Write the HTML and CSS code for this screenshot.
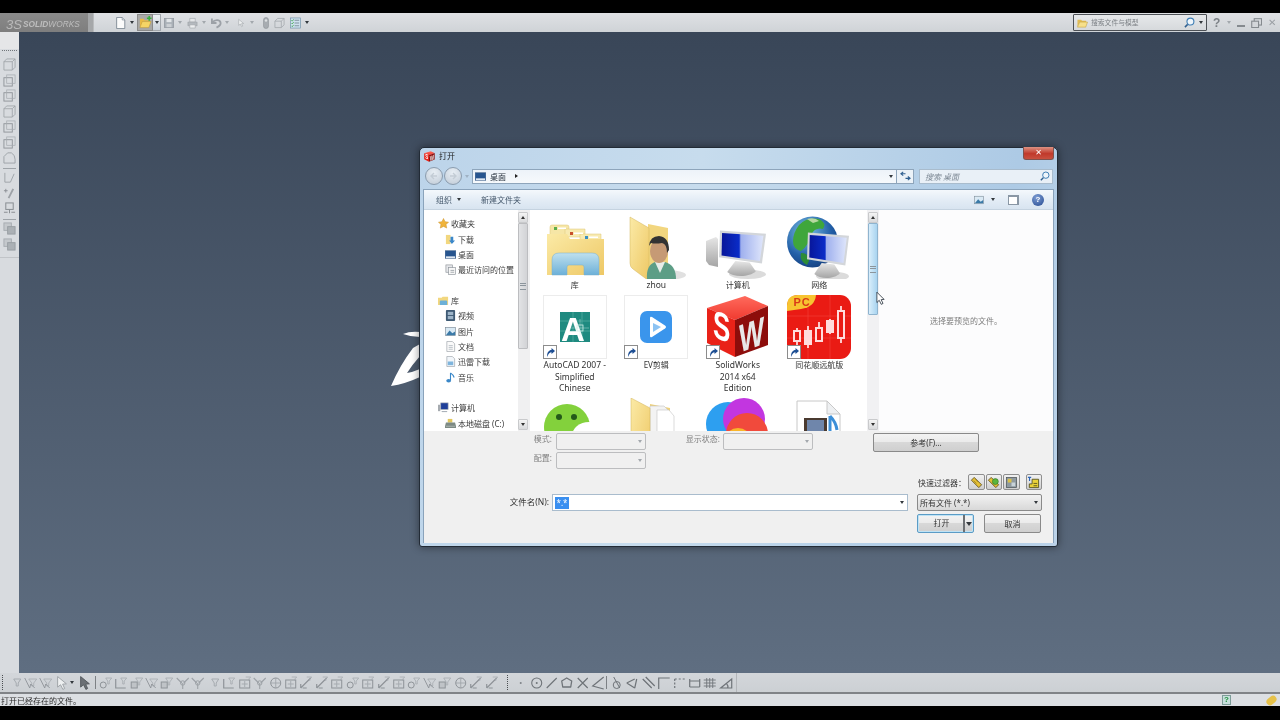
FILE: index.html
```html
<!DOCTYPE html>
<html lang="zh-CN">
<head>
<meta charset="utf-8">
<title>SolidWorks - 打开</title>
<link rel="stylesheet" href="styles.css">
</head>
<body>
<svg class="defs" xmlns="http://www.w3.org/2000/svg">
  <defs>
    <linearGradient id="gFolder" x1="0" y1="0" x2="1" y2="1"><stop offset="0" stop-color="#fbeaa6"/><stop offset="1" stop-color="#eec865"/></linearGradient>
    <linearGradient id="gBlue" x1="0" y1="0" x2="0" y2="1"><stop offset="0" stop-color="#bfe0ee"/><stop offset="1" stop-color="#6cb0d8"/></linearGradient>
    <linearGradient id="gScreen" x1="0" y1="0" x2="1" y2="0"><stop offset="0" stop-color="#08169a"/><stop offset=".42" stop-color="#0a2cc8"/><stop offset=".46" stop-color="#9fb0ee"/><stop offset="1" stop-color="#dfe6fb"/></linearGradient>
    <linearGradient id="gGray" x1="0" y1="0" x2="0" y2="1"><stop offset="0" stop-color="#e6e6e6"/><stop offset="1" stop-color="#a5a5a5"/></linearGradient>
    <radialGradient id="gGlobe" cx=".38" cy=".3" r=".8"><stop offset="0" stop-color="#7fc4e8"/><stop offset=".6" stop-color="#2360a8"/><stop offset="1" stop-color="#123a78"/></radialGradient>
    <linearGradient id="gRedTop" x1="0" y1="0" x2="0" y2="1"><stop offset="0" stop-color="#ff6a5c"/><stop offset="1" stop-color="#f03a30"/></linearGradient>
  </defs>

  <symbol id="shortcut" viewBox="0 0 14 14"><rect x=".5" y=".5" width="13" height="13" fill="#fff" stroke="#8c8c8c"/><path d="M4 12 C4 7 6 5 8.500 5 L8.500 3 L12 6 L8.500 9 L8.500 7.200 C7 7.200 5.500 8.500 4 12Z" fill="#1e4f94"/></symbol>

  <symbol id="monitor" viewBox="0 0 46 64" preserveAspectRatio="none">
    <ellipse cx="28" cy="58" rx="18" ry="6" fill="#000" opacity=".14"/>
    <path d="M16 41 L30 43 L36 54 C30 62 14 62 8 55Z" fill="url(#gGray)"/>
    <path d="M1 2 L46 6 L42 44 L0 36Z" fill="#d3d6da"/>
    <path d="M3 5 L43.500 8.500 L40 41 L2.500 34Z" fill="url(#gScreen)"/>
  </symbol>

  <symbol id="ico-lib" viewBox="0 0 64 64">
    <path d="M7 12 Q7 10 9 10 L24 10 Q26 10 26 12 L26 20 L7 20Z" fill="#f6e6a6" stroke="#dcc477" stroke-width=".5"/>
    <path d="M22 14 L42 14 L42 22 L22 22Z" fill="#f8eab0" stroke="#dcc477" stroke-width=".5"/>
    <path d="M37 19 L58 19 L58 26 L37 26Z" fill="#f8eab0" stroke="#dcc477" stroke-width=".5"/>
    <rect x="11" y="12" width="3" height="3" fill="#5cad4a"/><rect x="15" y="12.500" width="8" height="1.500" fill="#fff"/>
    <rect x="27" y="17" width="3" height="3" fill="#c8502c"/><rect x="31" y="17.500" width="9" height="1.500" fill="#fff"/>
    <rect x="42" y="21" width="3" height="3" fill="#3b8fc0"/><rect x="46" y="21.500" width="9" height="1.500" fill="#fff"/>
    <path d="M4 19 L24 19 L27 24 L61 24 L61 60 L4 60Z" fill="url(#gFolder)"/>
    <path d="M9 60 L9 45 Q9 38 16 38 L49 38 Q56 38 56 45 L56 60 L41 60 L41 52 Q41 50 39 50 L26 50 Q24 50 24 52 L24 60Z" fill="url(#gBlue)" stroke="#79aecb" stroke-width=".5"/>
  </symbol>

  <symbol id="ico-user" viewBox="0 0 64 64">
    <ellipse cx="42" cy="60" rx="20" ry="5" fill="#000" opacity=".12"/>
    <path d="M24 9 L44 13 L44 58 L24 60Z" fill="#f2d67f"/>
    <path d="M6 2 L25 13 L25 66 L9 54 Q6 52 6 48Z" fill="url(#gFolder)" stroke="#d2b55f" stroke-width=".5"/>
    <path d="M23 64 Q22 50 31 47 L41 47 Q52 50 52 64Z" fill="#5d9e86"/>
    <path d="M31 47 L36 58 L41 47Z" fill="#e7ece7"/>
    <ellipse cx="35" cy="36" rx="9" ry="12" fill="#c69a75"/>
    <path d="M25 31 Q26 21 35 21 Q45 22 45 35 L43 38 Q43 29 38 28 Q31 29 27 28Z" fill="#333"/>
  </symbol>

  <symbol id="ico-pc" viewBox="0 0 64 64">
    <path d="M0 26 L10 22 L12 24 L12 52 L3 50 L0 46Z" fill="url(#gGray)"/>
    <use href="#monitor" x="13" y="14" width="47" height="50"/>
  </symbol>

  <symbol id="ico-net" viewBox="0 0 64 64">
    <circle cx="25.500" cy="27" r="25.500" fill="url(#gGlobe)"/>
    <path d="M12 10 Q20 2 32 4 Q40 8 36 14 Q28 12 24 20 Q22 30 14 36 Q6 34 6 26 Q6 18 12 10Z" fill="#3fa63b"/>
    <path d="M14 38 Q22 38 22 46 L20 50 Q12 46 14 38Z" fill="#2d8c36"/>
    <path d="M20 4 Q28 2 32 6 L26 8Z" fill="#b8d8a0"/>
    <use href="#monitor" x="20" y="16" width="42" height="50"/>
  </symbol>

  <symbol id="ico-acad" viewBox="0 0 64 64">
    <rect x="17" y="17" width="30" height="30" fill="#1f8a80"/>
    <path d="M30 17 V47 M39 17 V47 M17 26 H47 M17 36 H47" stroke="#58b0a5" stroke-width=".7"/>
  </symbol>
  <symbol id="ico-acad2" viewBox="0 0 64 64">
    <rect x="34" y="30" width="6" height="6" fill="none" stroke="#cfeee8" stroke-width=".8"/>
    <path d="M37 24 V42 M28 33 H46" stroke="#cfeee8" stroke-width=".4"/>
  </symbol>

  <symbol id="ico-ev" viewBox="0 0 64 64">
    <rect x="16" y="16" width="32" height="32" rx="7" fill="#3a95ec"/>
    <path d="M26 23 Q26 21 28 22 L41 30.500 Q43 32 41 33.500 L28 42 Q26 43 26 41Z" fill="#fff"/>
    <path d="M29 28 L37 32 L29 37Z" fill="#8cc3f3"/>
  </symbol>

  <symbol id="ico-sw" viewBox="0 0 64 64">
    <path d="M1 13 L39 1 L62 11 L29 25Z" fill="url(#gRedTop)"/>
    <path d="M1 13 L29 25 L29 62 L1 48Z" fill="#e92218"/>
    <path d="M29 25 L62 11 L62 50 L29 62Z" fill="#8d0d0b"/>
  </symbol>

  <symbol id="ico-ths" viewBox="0 0 64 64">
    <rect x="0" y="0" width="64" height="64" rx="11" fill="#ea1b14"/>
    <path d="M21 0 V64 M43 0 V64 M0 21 H64 M0 43 H64" stroke="#f3433b" stroke-width=".6"/>
    <path d="M0 16 V11 Q0 0 11 0 L29 0 Q28 12 14 14 Z" fill="#f7c431"/>
    <g fill="#ea1b14" stroke="#ffdcdc" stroke-width="2">
      <path d="M10 33 V50 M21 31 V53 M32 27 V47 M43 24 V39 M54 11 V48" stroke-width="1.800" fill="none"/>
      <rect x="7" y="36" width="6" height="10"/><rect x="18" y="36" width="6" height="13" fill="#ffdcdc"/><rect x="29" y="33" width="6" height="13"/><rect x="40" y="26" width="6" height="11" fill="#ffdcdc"/><rect x="51" y="16" width="6" height="27"/>
    </g>
  </symbol>

  <symbol id="ico-wx" viewBox="0 0 64 64">
    <circle cx="24" cy="29" r="23" fill="#83d13c"/>
    <circle cx="16" cy="19" r="3" fill="#24591a"/><circle cx="31" cy="19" r="3" fill="#24591a"/>
    <ellipse cx="46" cy="38" rx="17" ry="14" fill="#fff"/>
  </symbol>

  <symbol id="ico-docs" viewBox="0 0 64 64">
    <path d="M26 6 L46 10 L46 64 L26 64Z" fill="#f0d27a"/>
    <path d="M26 8 H40 L46 14 V64 H26Z" fill="#f3f3f3" stroke="#c5c5c5" stroke-width=".6"/>
    <path d="M33 12 H45 L50 18 V64 H33Z" fill="#fff" stroke="#c5c5c5" stroke-width=".6"/>
    <path d="M7 0 L26 10 L26 66 L7 50Z" fill="url(#gFolder)" stroke="#d2b55f" stroke-width=".5"/>
  </symbol>

  <symbol id="ico-color" viewBox="0 0 64 64">
    <circle cx="22" cy="26" r="22" fill="#2d9ff0"/>
    <circle cx="38" cy="21" r="21" fill="#c236e0"/>
    <circle cx="41" cy="36" r="21" fill="#f14a3c"/>
    <circle cx="32" cy="44" r="14" fill="#f9b62a"/>
    <circle cx="30" cy="47" r="8" fill="#fff"/>
  </symbol>

  <symbol id="ico-file" viewBox="0 0 64 64">
    <path d="M10 3 H40 L53 16 V64 H10Z" fill="#fff" stroke="#c8c8c8"/>
    <path d="M40 3 V16 H53Z" fill="#eef0f2" stroke="#c8c8c8"/>
    <rect x="17" y="20" width="23" height="16" fill="#4a3a30"/>
    <rect x="20" y="22" width="17" height="12" fill="#6f86ab"/>
    <path d="M43 18 V36 M43 18 Q49 24 50 32" fill="none" stroke="#3c8fd8" stroke-width="3"/>
  </symbol>

  <symbol id="s-star" viewBox="0 0 12 12"><path d="M6 .5 L7.700 4 L11.500 4.500 L8.800 7.200 L9.500 11 L6 9.200 L2.500 11 L3.200 7.200 L.5 4.500 L4.300 4Z" fill="#f0b43c" stroke="#c98e25" stroke-width=".5"/></symbol>
  <symbol id="s-dl" viewBox="0 0 12 12"><path d="M1 1 H6 V11 H1Z" fill="#f2d77f"/><path d="M6 3 H9 V7 H11 L7.500 11 L4.500 7 H6Z" fill="#3b87c9"/></symbol>
  <symbol id="s-desk" viewBox="0 0 12 12"><rect x="0" y="1.500" width="12" height="9" fill="#27558f" stroke="#8295ac" stroke-width=".6"/><path d="M1 8 H11 V10 H1Z" fill="#dfe8f2"/></symbol>
  <symbol id="s-recent" viewBox="0 0 12 12"><rect x="1" y="1" width="7" height="8" fill="#e5e7ea" stroke="#8b9197" stroke-width=".7"/><rect x="4" y="4" width="7.500" height="7.500" fill="#f7f7f7" stroke="#8b9197" stroke-width=".7"/><path d="M6 7 H10 M6 9 H10" stroke="#7d858c" stroke-width=".7"/></symbol>
  <symbol id="s-lib" viewBox="0 0 12 12"><path d="M0 3 H4 L5 2 H11 V11 H0Z" fill="#f2d77f"/><path d="M2 11 V7 Q2 6 3 6 H9 Q10 6 10 7 V11Z" fill="#6cb0d8"/></symbol>
  <symbol id="s-video" viewBox="0 0 12 12"><rect x="1" y="0" width="10" height="12" rx="1" fill="#3f5a74"/><rect x="3" y="2" width="6" height="3.500" fill="#9db4c8"/><rect x="3" y="6.500" width="6" height="3.500" fill="#9db4c8"/></symbol>
  <symbol id="s-pic" viewBox="0 0 12 12"><rect x=".5" y="1.500" width="11" height="9" fill="#d9e9f4" stroke="#7d8b97" stroke-width=".7"/><path d="M1 10 L5 5 L8 8 L11 6 V10Z" fill="#3b7aa8"/></symbol>
  <symbol id="s-doc" viewBox="0 0 12 12"><path d="M2 .5 H8 L10.500 3 V11.500 H2Z" fill="#fafafa" stroke="#9aa0a6" stroke-width=".7"/><path d="M4 5 H8.500 M4 7 H8.500 M4 9 H8.500" stroke="#8f9aa5" stroke-width=".6"/></symbol>
  <symbol id="s-thunder" viewBox="0 0 12 12"><path d="M2 .5 H8 L10.500 3 V11.500 H2Z" fill="#f2f6fa" stroke="#9aa0a6" stroke-width=".7"/><rect x="3" y="6" width="6" height="4" fill="#7fb5dd"/></symbol>
  <symbol id="s-music" viewBox="0 0 12 12"><path d="M6 1 V9 M6 1 Q9 3 10 6" fill="none" stroke="#3a87c8" stroke-width="1.200"/><ellipse cx="4" cy="9.500" rx="2.600" ry="2" fill="#3a87c8"/></symbol>
  <symbol id="s-pc" viewBox="0 0 12 12"><rect x="3" y="1" width="8" height="7" fill="#1f3f99" stroke="#9aa3ad" stroke-width=".7"/><rect x="0" y="3" width="2.500" height="7" fill="#a6abb0"/><path d="M4 10 H10 V11 H4Z" fill="#9aa3ad"/></symbol>
  <symbol id="s-disk" viewBox="0 0 12 12"><path d="M3 1 H8 V5 H3Z" fill="#e3c75d"/><path d="M1 5 H11 L12 9 V11 H0 V9Z" fill="#7d8a84"/><path d="M1 9 H11" stroke="#c6ccc8" stroke-width=".7"/></symbol>

  <symbol id="t-new" viewBox="0 0 12 14"><path d="M1.500 .5 H8 L11 3.500 V13.500 H1.500Z" fill="#fbfbfb" stroke="#77838f"/><path d="M8 .5 V3.500 H11" fill="#dfe5ea" stroke="#77838f" stroke-width=".7"/></symbol>
  <symbol id="t-open" viewBox="0 0 14 14"><path d="M1 3 H5 L6 4.500 H11 V6 H4 L1 12Z" fill="#e8b945"/><path d="M1 12.500 L3.500 6 H13 L10.500 12.500Z" fill="#f5d565" stroke="#bf9429" stroke-width=".5"/><path d="M11 0 V5 M8.500 2.500 H13.500" stroke="#35b03a" stroke-width="1.600"/></symbol>
  <symbol id="t-save" viewBox="0 0 12 12"><rect x=".5" y=".5" width="11" height="11" fill="#a9b0b7" stroke="#959ba2"/><rect x="3" y="1" width="6" height="4" fill="#e2e5e8"/><rect x="3" y="7" width="6" height="4" fill="#cbcfd3"/></symbol>
  <symbol id="t-print" viewBox="0 0 12 12"><path d="M3 1 H9 V5 H3Z" fill="#e5e7e9" stroke="#a2a7ac" stroke-width=".7"/><path d="M1 5 H11 V9 H1Z" fill="#b4b9be" stroke="#989da2" stroke-width=".6"/><path d="M3 8 H9 V11.500 H3Z" fill="#eceeef" stroke="#a2a7ac" stroke-width=".7"/></symbol>
  <symbol id="t-undo" viewBox="0 0 12 12"><path d="M1 1 V6 H6 M1.500 5.500 C4 2 10 2 10.500 6 C10.700 8.500 8 10 6 11" fill="none" stroke="#9ca1a7" stroke-width="2"/></symbol>
  <symbol id="t-sel" viewBox="0 0 12 12"><path d="M2.500 .5 L2.500 9.500 L5 7.500 L7 11.500 L8.500 10.700 L6.800 7 L10 6.700Z" fill="#eef0f1" stroke="#9ba0a5" stroke-width=".8"/></symbol>
  <symbol id="t-seld" viewBox="0 0 12 12"><path d="M2.500 .5 L2.500 9.500 L5 7.500 L7 11.500 L8.500 10.700 L6.800 7 L10 6.700Z" fill="#6b7075" stroke="#54595e" stroke-width=".8"/></symbol>
  <symbol id="t-light" viewBox="0 0 8 12"><rect x="1.500" y=".5" width="5" height="11" rx="2.500" fill="#a7acb1" stroke="#8f9499" stroke-width=".6"/><circle cx="4" cy="3.500" r="1.200" fill="#dfe2e4"/></symbol>
  <symbol id="t-opt" viewBox="0 0 12 12"><path d="M1 4 H8 V11 H1Z M1 4 L4 1 H11 V8 L8 11 M8 4 L11 1" fill="none" stroke="#a5aaaf" stroke-width=".9"/></symbol>
  <symbol id="t-check" viewBox="0 0 12 12"><rect x=".5" y=".5" width="11" height="11" fill="#cfe2ef" stroke="#6c8ea6" stroke-width=".7"/><path d="M5 3 H10 M5 6 H10 M5 9 H10" stroke="#7a8b98"/><path d="M1.500 3 L2.500 4 L4 2 M1.500 6 L2.500 7 L4 5 M1.500 9 L2.500 10 L4 8" fill="none" stroke="#2f9d3a" stroke-width=".8"/></symbol>
  <symbol id="t-lens" viewBox="0 0 12 12"><circle cx="7" cy="5" r="3.800" fill="#eef5fb" stroke="#3f7fb5" stroke-width="1.200"/><path d="M4 8 L1 11" stroke="#2f5f8f" stroke-width="1.700"/></symbol>
  <symbol id="t-folder" viewBox="0 0 12 10"><path d="M.5 1.500 H4.500 L5.500 2.500 H10 V4 H3 L.5 9Z" fill="#e2bc55"/><path d="M.5 9.500 L3 4 H11.500 L9.500 9.500Z" fill="#f7e08a" stroke="#b9952f" stroke-width=".5"/></symbol>
  <symbol id="t-restore" viewBox="0 0 12 11"><rect x="3.500" y=".75" width="8" height="7" fill="none" stroke="#858a8f" stroke-width="1.200"/><rect x=".75" y="3.500" width="7.500" height="7" fill="#d3d6da" stroke="#858a8f" stroke-width="1.200"/></symbol>
  <symbol id="t-refresh" viewBox="0 0 12 12"><path d="M6 3 H1.500 M3.500 1 L1 3 L3.500 5" fill="none" stroke="#2f5f90" stroke-width="1.200"/><path d="M6 8 H10.500 M8.500 6 L11 8 L8.500 10" fill="none" stroke="#2f5f90" stroke-width="1.200"/></symbol>
  <symbol id="t-back" viewBox="0 0 10 10"><path d="M8 5 H2.500 M5 2 L2 5 L5 8" fill="none" stroke="#c3ccd5" stroke-width="1.400"/></symbol>
  <symbol id="t-fwd" viewBox="0 0 10 10"><path d="M2 5 H7.500 M5 2 L8 5 L5 8" fill="none" stroke="#c3ccd5" stroke-width="1.400"/></symbol>

  <symbol id="f-tag" viewBox="0 0 14 14"><path d="M1.500 4.500 L4.500 1.500 L12.500 9.500 L9.500 12.500Z" fill="#e6c033" stroke="#5b4c17" stroke-width=".9"/><path d="M4 5 L7 8 M6 3.500 L9 6.500" stroke="#8a7420" stroke-width=".7"/></symbol>
  <symbol id="f-tag2" viewBox="0 0 14 14"><path d="M1.500 4.500 L4.500 1.500 L12.500 9.500 L9.500 12.500Z" fill="#e6c033" stroke="#5b4c17" stroke-width=".9"/><circle cx="9" cy="6" r="3.200" fill="#5ab53c" stroke="#2b6b1f" stroke-width=".6"/></symbol>
  <symbol id="f-asm" viewBox="0 0 14 14"><rect x="1.500" y="1.500" width="11" height="11" fill="#8f9aa0" stroke="#4f565b" stroke-width=".8"/><rect x="3" y="3" width="4" height="4" fill="#d9c04a"/><rect x="7" y="7" width="4" height="4" fill="#c9d3d8"/></symbol>
  <symbol id="f-last" viewBox="0 0 14 14"><path d="M5.500 3.500 H12.500 V12.500 H2.500 V8.500 H5.500Z" fill="#e9d23a" stroke="#4d4a1b" stroke-width=".9"/><path d="M7 8 H11 M7 10.500 H11" stroke="#4d4a1b" stroke-width=".9"/><path d="M1 1.500 H4.500 M2.750 1.500 V5.500" stroke="#2c66b8" stroke-width="1.200"/></symbol>

  <symbol id="b-a" viewBox="0 0 14 14"><path d="M5 3 H12 L9.500 7 V10 H7.500 V7Z" fill="none" stroke="#a6abb0"/></symbol>
  <symbol id="b-b" viewBox="0 0 14 14"><path d="M5 3 H13 L10 7 V10 H8 V7Z" fill="none" stroke="#a6abb0" stroke-width=".8"/><path d="M1 2 L6 12 L7 8 L11 12" fill="none" stroke="#8e9398" stroke-width=".9"/></symbol>
  <symbol id="b-c" viewBox="0 0 14 14"><path d="M6 2 H13 L10 6 V9 H8.500 V6Z" fill="none" stroke="#a6abb0" stroke-width=".8"/><rect x="1.500" y="6" width="6" height="6" fill="#bfc3c7" stroke="#8e9398"/></symbol>
  <symbol id="b-d" viewBox="0 0 14 14"><path d="M7 2 H13 L10.500 5 V8 H9 V5Z" fill="none" stroke="#a6abb0" stroke-width=".8"/><circle cx="4.500" cy="9" r="3" fill="none" stroke="#8e9398"/></symbol>
  <symbol id="b-e" viewBox="0 0 14 14"><path d="M1 2 L6 7 M8 7 L13 2 M7 7 V13" fill="none" stroke="#9da2a7" stroke-width="1.100"/><circle cx="7" cy="7" r="2.200" fill="none" stroke="#9da2a7"/></symbol>
  <symbol id="b-f" viewBox="0 0 14 14"><path d="M2 3 V12 H12" fill="none" stroke="#8e9398" stroke-width="1.200"/><path d="M7 2 H13 L10.500 5 V8 H9 V5Z" fill="none" stroke="#a6abb0" stroke-width=".8"/></symbol>
  <symbol id="b-g" viewBox="0 0 14 14"><rect x="2" y="4" width="10" height="8" fill="none" stroke="#8e9398"/><path d="M4 8 L10 8 M7 5 V11" stroke="#a6abb0"/><path d="M8 1 H13 L11 3 V5" fill="none" stroke="#a6abb0" stroke-width=".8"/></symbol>
  <symbol id="b-h" viewBox="0 0 14 14"><circle cx="7" cy="7" r="5" fill="none" stroke="#8e9398"/><path d="M2 7 H12 M7 2 V12" stroke="#9da2a7" stroke-width=".8"/></symbol>
  <symbol id="b-i" viewBox="0 0 14 14"><path d="M2 12 L12 2 M4 12 H8 M2 8 V12" fill="none" stroke="#8e9398" stroke-width="1.200"/><path d="M8 1 H13 L11 3 V5" fill="none" stroke="#a6abb0" stroke-width=".8"/></symbol>
  <symbol id="k-dot" viewBox="0 0 14 14"><circle cx="7" cy="7" r="1" fill="#7d8287"/></symbol>
  <symbol id="k-circle" viewBox="0 0 14 14"><circle cx="7" cy="7" r="5" fill="none" stroke="#6f7479" stroke-width="1.100"/><circle cx="7" cy="7" r="1" fill="#6f7479"/></symbol>
  <symbol id="k-line" viewBox="0 0 14 14"><path d="M2 12 L12 2" stroke="#6f7479" stroke-width="1.200"/></symbol>
  <symbol id="k-poly" viewBox="0 0 14 14"><path d="M7 2 L12 5 L11 11 L3 11 L2 5Z" fill="none" stroke="#6f7479" stroke-width="1.300" stroke-linejoin="round"/></symbol>
  <symbol id="k-x" viewBox="0 0 14 14"><path d="M2 2 L12 12 M12 2 L2 12" stroke="#6f7479" stroke-width="1.200"/></symbol>
  <symbol id="k-angle" viewBox="0 0 14 14"><path d="M13 1 L2 10 L13 13" fill="none" stroke="#6f7479" stroke-width="1.200"/></symbol>
  <symbol id="k-tan" viewBox="0 0 14 14"><circle cx="6" cy="9" r="3.500" fill="none" stroke="#6f7479"/><path d="M3 1 L9 12" stroke="#6f7479"/></symbol>
  <symbol id="k-arrow" viewBox="0 0 14 14"><path d="M1 7 L9 3 M1 7 L9 12 M9 12 L11 3" fill="none" stroke="#6f7479" stroke-width="1.200"/></symbol>
  <symbol id="k-par" viewBox="0 0 14 14"><path d="M1 3 L10 12 M4 1 L13 10" stroke="#6f7479" stroke-width="1.300"/></symbol>
  <symbol id="k-perp" viewBox="0 0 14 14"><path d="M2 13 V2 H13" fill="none" stroke="#6f7479" stroke-width="1.200"/></symbol>
  <symbol id="k-pts" viewBox="0 0 14 14"><path d="M3 3 V12" stroke="#6f7479" stroke-dasharray="2 1.500" stroke-width="1.200"/><path d="M3 3 H13" stroke="#6f7479" stroke-dasharray="2 2" stroke-width="1.200"/></symbol>
  <symbol id="k-dim" viewBox="0 0 14 14"><path d="M2 3 V11 M12 3 V11 M2 5 H12" fill="none" stroke="#6f7479" stroke-width="1.200"/><path d="M2 11 H12" stroke="#6f7479"/></symbol>
  <symbol id="k-grid" viewBox="0 0 14 14"><path d="M1 4 H13 M1 7 H13 M1 10 H13 M4 2 V12 M7 2 V12 M10 2 V12" stroke="#6f7479" stroke-width=".9"/></symbol>
  <symbol id="k-tri" viewBox="0 0 14 14"><path d="M2 12 H13 V3Z M9 12 A4 4 0 0 0 8 8" fill="none" stroke="#6f7479" stroke-width="1.200"/></symbol>

  <symbol id="l-cube" viewBox="0 0 14 14"><path d="M1 4 L4 1 H13 V10 L10 13 H1Z M1 4 H10 V13 M10 4 L13 1" fill="none" stroke="#9da2a7" stroke-width=".9"/></symbol>
  <symbol id="l-cube2" viewBox="0 0 14 14"><rect x="1" y="4" width="9" height="9" fill="none" stroke="#8f9499"/><rect x="4" y="1" width="9" height="9" fill="none" stroke="#a6abb0" stroke-width=".8"/></symbol>
  <symbol id="l-round" viewBox="0 0 14 14"><path d="M1 13 V6 L5 2 H9 Q13 4 13 9 V13Z" fill="none" stroke="#9da2a7"/></symbol>
  <symbol id="l-sk" viewBox="0 0 14 14"><path d="M2 2 V12 H8 L12 3" fill="none" stroke="#9da2a7"/></symbol>
  <symbol id="l-pen" viewBox="0 0 14 14"><path d="M1 4 H5 M3 2 V6" stroke="#8a8f94"/><path d="M6 12 L11 2" stroke="#9da2a7" stroke-width="2"/></symbol>
  <symbol id="l-net" viewBox="0 0 14 14"><rect x="3" y="1" width="8" height="7" fill="none" stroke="#8a8f94" stroke-width="1.100"/><path d="M1 11 H5 M9 11 H13 M7 8 V12" stroke="#8a8f94" stroke-width="1.100"/></symbol>
  <symbol id="l-stack" viewBox="0 0 14 14"><rect x="1" y="1" width="8" height="8" fill="#c4c8cc" stroke="#a6abb0"/><rect x="5" y="5" width="8" height="8" fill="#abb0b5" stroke="#989da2"/></symbol>
</svg>

<div class="app">
  <header class="topbar">
    <div class="logo"><span class="ds">3S</span><span class="sw"><b>SOLID</b>WORKS</span></div>
    <div class="grip"></div>
    <div class="quick">
      <span class="qg w22"><svg class="q"><use href="#t-new"/></svg><i class="caret dark"></i></span>
      <span class="qg w27 hl-wrap"><span class="hl"><svg class="q"><use href="#t-open"/></svg></span><span class="hl-caret"><i class="caret dark"></i></span></span>
      <span class="qg w23"><svg class="q q10"><use href="#t-save"/></svg><i class="caret"></i></span>
      <span class="qg w24"><svg class="q"><use href="#t-print"/></svg><i class="caret"></i></span>
      <span class="qg w26"><svg class="q"><use href="#t-undo"/></svg><i class="caret"></i></span>
      <span class="qg w25"><svg class="q q8"><use href="#t-sel"/></svg><i class="caret"></i></span>
      <span class="qg w12"><svg class="q q8"><use href="#t-light"/></svg></span>
      <span class="qg w16"><svg class="q"><use href="#t-opt"/></svg></span>
      <span class="qg"><svg class="q"><use href="#t-check"/></svg><i class="caret dark"></i></span>
    </div>
    <div class="search">
      <svg class="sf"><use href="#t-folder"/></svg>
      <span class="search-text">搜索文件与模型</span>
      <svg class="sl"><use href="#t-lens"/></svg><i class="caret dark"></i>
    </div>
    <div class="winbtns">
      <span class="help">?</span><i class="caret"></i>
      <span class="w-min"></span><svg class="w-max"><use href="#t-restore"/></svg><span class="w-close">✕</span>
    </div>
  </header>

  <div class="main">
    <aside class="strip">
      <div class="strip-top"></div>
      <div class="dots"></div>
      <svg class="l"><use href="#l-cube"/></svg>
      <svg class="l"><use href="#l-cube2"/></svg>
      <svg class="l"><use href="#l-cube2"/></svg>
      <svg class="l"><use href="#l-cube"/></svg>
      <svg class="l"><use href="#l-cube2"/></svg>
      <svg class="l"><use href="#l-cube2"/></svg>
      <svg class="l"><use href="#l-round"/></svg>
      <div class="l-sep"></div>
      <svg class="l"><use href="#l-sk"/></svg>
      <svg class="l"><use href="#l-pen"/></svg>
      <svg class="l"><use href="#l-net"/></svg>
      <div class="l-sep"></div>
      <svg class="l"><use href="#l-stack"/></svg>
      <svg class="l"><use href="#l-stack"/></svg>
      <div class="l-end"></div>
    </aside>

    <main class="canvas">
      <svg class="brush" viewBox="390 328 30 60"><path d="M403 334 Q410 331 420 332 L420 337 Q411 337 403 334Z M391 386 Q400 365 413 348 L420 344 L420 356 Q412 365 407 373 Q413 372 420 369 L420 377 Q405 384 391 386Z" fill="#fff"/></svg>

      <section class="dialog">
        <div class="titlebar">
          <svg class="d-ico" viewBox="0 0 64 64"><use href="#ico-sw" width="64" height="64"/><text class="sw-s" transform="translate(7 42) skewY(20) scale(.72 1.1)">S</text><text class="sw-w" transform="translate(33 58) skewY(-20) scale(.74 1.1)">W</text></svg>
          <span class="d-title">打开</span>
          <span class="d-close">✕</span>
        </div>
        <div class="navbar">
          <span class="nav-circle"><svg><use href="#t-back"/></svg></span><span class="nav-circle"><svg><use href="#t-fwd"/></svg></span>
          <i class="nav-drop"></i>
          <div class="addr">
            <svg class="s12"><use href="#s-desk"/></svg>
            <span class="addr-text">桌面</span>
            <i class="tri-r"></i>
            <i class="caret dark addr-caret"></i>
          </div>
          <div class="refresh"><svg><use href="#t-refresh"/></svg></div>
          <div class="d-search"><span>搜索 桌面</span><svg class="s10"><use href="#t-lens"/></svg></div>
        </div>
        <div class="inner">
          <div class="dtool">
            <span class="dt-item">组织</span><i class="caret dark dt-caret"></i>
            <span class="dt-item dt-new">新建文件夹</span>
            <span class="dt-right">
              <svg class="s10 view"><use href="#s-pic"/></svg><i class="caret dark"></i>
              <span class="pane"></span>
              <span class="qmark">?</span>
            </span>
          </div>
          <div class="browse">
            <nav class="side">
              <div class="tree">
                <div class="g"><svg class="s12"><use href="#s-star"/></svg>收藏夹</div>
                <div class="c"><svg class="s12"><use href="#s-dl"/></svg>下载</div>
                <div class="c"><svg class="s12"><use href="#s-desk"/></svg>桌面</div>
                <div class="c"><svg class="s12"><use href="#s-recent"/></svg>最近访问的位置</div>
                <div class="g gap"><svg class="s12"><use href="#s-lib"/></svg>库</div>
                <div class="c"><svg class="s12"><use href="#s-video"/></svg>视频</div>
                <div class="c"><svg class="s12"><use href="#s-pic"/></svg>图片</div>
                <div class="c"><svg class="s12"><use href="#s-doc"/></svg>文档</div>
                <div class="c"><svg class="s12"><use href="#s-thunder"/></svg>迅雷下载</div>
                <div class="c"><svg class="s12"><use href="#s-music"/></svg>音乐</div>
                <div class="g gap"><svg class="s12"><use href="#s-pc"/></svg>计算机</div>
                <div class="c"><svg class="s12"><use href="#s-disk"/></svg>本地磁盘 (C:)</div>
              </div>
              <div class="sb sb-side">
                <span class="sb-up"></span>
                <span class="thumb thumb-gray"></span>
                <span class="sb-dn"></span>
              </div>
            </nav>
            <div class="files">
              <div class="f"><svg class="fi"><use href="#ico-lib"/></svg><p>库</p></div>
              <div class="f"><svg class="fi"><use href="#ico-user"/></svg><p class="lat">zhou</p></div>
              <div class="f"><svg class="fi"><use href="#ico-pc"/></svg><p>计算机</p></div>
              <div class="f"><svg class="fi"><use href="#ico-net"/></svg><p>网络</p></div>
              <div class="f"><div class="fw framed"><svg class="fi" viewBox="0 0 64 64"><use href="#ico-acad" width="64" height="64"/><text class="acad-a" x="18" y="46">A</text><use href="#ico-acad2" width="64" height="64"/></svg><svg class="sc"><use href="#shortcut"/></svg></div><p class="lat">AutoCAD 2007 - Simplified Chinese</p></div>
              <div class="f"><div class="fw framed"><svg class="fi"><use href="#ico-ev"/></svg><svg class="sc"><use href="#shortcut"/></svg></div><p>EV剪辑</p></div>
              <div class="f"><div class="fw"><svg class="fi" viewBox="0 0 64 64"><use href="#ico-sw" width="64" height="64"/><text class="sw-s" transform="translate(7 42) skewY(20) scale(.72 1.1)">S</text><text class="sw-w" transform="translate(33 58) skewY(-20) scale(.74 1.1)">W</text></svg><svg class="sc"><use href="#shortcut"/></svg></div><p class="lat">SolidWorks 2014 x64 Edition</p></div>
              <div class="f"><div class="fw"><svg class="fi" viewBox="0 0 64 64"><use href="#ico-ths" width="64" height="64"/><text class="ths-pc" x="6.500" y="11">PC</text></svg><svg class="sc"><use href="#shortcut"/></svg></div><p>同花顺远航版</p></div>
              <div class="f"><svg class="fi"><use href="#ico-wx"/></svg></div>
              <div class="f"><svg class="fi"><use href="#ico-docs"/></svg></div>
              <div class="f"><svg class="fi"><use href="#ico-color"/></svg></div>
              <div class="f"><svg class="fi"><use href="#ico-file"/></svg></div>
            </div>
            <div class="sb sb-files">
              <span class="sb-up"></span>
              <span class="thumb thumb-blue"></span>
              <span class="sb-dn"></span>
            </div>
            <div class="preview">选择要预览的文件。</div>
          </div>
          <div class="panel">
            <div class="prow r1">
              <label class="l1">模式:</label><span class="combo off"><i class="caret"></i></span>
              <label class="l2">显示状态:</label><span class="combo off"><i class="caret"></i></span>
              <button class="btn browsebtn">参考(F)...</button>
            </div>
            <div class="prow r2">
              <label class="l1">配置:</label><span class="combo off"><i class="caret"></i></span>
            </div>
            <div class="prow r3">
              <span class="qf">快速过滤器：</span>
              <span class="fb"><svg><use href="#f-tag"/></svg></span>
              <span class="fb"><svg><use href="#f-tag2"/></svg></span>
              <span class="fb"><svg><use href="#f-asm"/></svg></span>
              <span class="fb fb-last"><svg><use href="#f-last"/></svg></span>
            </div>
            <div class="prow r4">
              <label class="l3">文件名(N):</label>
              <span class="input"><span class="sel">*.*</span><i class="caret dark"></i></span>
              <span class="combo type">所有文件 (*.*)<i class="caret dark"></i></span>
            </div>
            <div class="prow r5">
              <button class="btn open"><span class="open-t">打开</span><span class="open-c"><i class="caret dark"></i></span></button>
              <button class="btn cancel">取消</button>
            </div>
          </div>
        </div>
      </section>
      <svg class="cursor" viewBox="0 0 10 15"><path d="M1 .5 V12 L3.600 9.500 L5.800 14 L7.800 13 L5.700 8.800 L9 8.500Z" fill="#fff" stroke="#26303c" stroke-width=".9"/></svg>
    </main>
  </div>

  <div class="cmdbar">
    <span class="vgrip"></span>
    <svg class="b"><use href="#b-a"/></svg><svg class="b"><use href="#b-b"/></svg><svg class="b"><use href="#b-b"/></svg><svg class="b"><use href="#t-sel"/></svg><i class="caret dark cmd-caret"></i><svg class="b b-sel"><use href="#t-seld"/></svg>
    <span class="vsep"></span>
    <svg class="b"><use href="#b-d"/></svg><svg class="b"><use href="#b-f"/></svg><svg class="b"><use href="#b-c"/></svg><svg class="b"><use href="#b-b"/></svg><svg class="b"><use href="#b-c"/></svg><svg class="b"><use href="#b-e"/></svg><svg class="b"><use href="#b-e"/></svg><svg class="b"><use href="#b-a"/></svg><svg class="b"><use href="#b-f"/></svg><svg class="b"><use href="#b-g"/></svg><svg class="b"><use href="#b-e"/></svg><svg class="b"><use href="#b-h"/></svg><svg class="b"><use href="#b-g"/></svg><svg class="b"><use href="#b-i"/></svg><svg class="b"><use href="#b-i"/></svg><svg class="b"><use href="#b-g"/></svg><svg class="b"><use href="#b-d"/></svg><svg class="b"><use href="#b-g"/></svg><svg class="b"><use href="#b-i"/></svg><svg class="b"><use href="#b-g"/></svg><svg class="b"><use href="#b-d"/></svg><svg class="b"><use href="#b-b"/></svg><svg class="b"><use href="#b-c"/></svg><svg class="b"><use href="#b-h"/></svg><svg class="b"><use href="#b-i"/></svg><svg class="b"><use href="#b-i"/></svg>
    <span class="vgrip mid"></span>
    <svg class="b"><use href="#k-dot"/></svg><svg class="b"><use href="#k-circle"/></svg><svg class="b"><use href="#k-line"/></svg><svg class="b"><use href="#k-poly"/></svg><svg class="b"><use href="#k-x"/></svg><svg class="b"><use href="#k-angle"/></svg>
    <span class="vsep tight"></span>
    <svg class="b"><use href="#k-tan"/></svg><svg class="b"><use href="#k-arrow"/></svg><svg class="b"><use href="#k-par"/></svg><svg class="b"><use href="#k-perp"/></svg><svg class="b"><use href="#k-pts"/></svg><svg class="b"><use href="#k-dim"/></svg><svg class="b"><use href="#k-grid"/></svg><svg class="b"><use href="#k-tri"/></svg>
    <span class="cmd-end"></span>
  </div>

  <footer class="status">
    <span>打开已经存在的文件。</span>
    <span class="st-help">?</span>
    <span class="st-pill"></span>
  </footer>
</div>
</body>
</html>
```

FILE: styles.css
```css
* { box-sizing: border-box; }
html, body { margin: 0; height: 720px; overflow: hidden; background: #000; }
body { font-family: "Noto Sans", "Noto Sans CJK SC", sans-serif; font-size: 8px; line-height: 11px; color: #3d3d3d; }
.defs { display: block; width: 0; height: 0; overflow: hidden; }
p { margin: 0; }
i { display: inline-block; font-style: normal; }
button { font: inherit; color: inherit; padding: 0; }

.app { height: 720px; padding: 13px 0 14px; display: flex; flex-direction: column; background: #000; filter: blur(.35px); }

.caret { width: 0; height: 0; border-left: 2.5px solid transparent; border-right: 2.5px solid transparent; border-top: 3px solid #a3a8ad; flex: none; }
.caret.dark { border-top-color: #33383d; }

/* top bar */
.topbar { height: 19px; flex: none; display: flex; align-items: stretch; background: linear-gradient(#dfe1e4, #cfd3d7); }
.logo { width: 88px; background: linear-gradient(#8a8a8a, #7e7e7e); display: flex; align-items: center; padding: 4px 0 0 6px; }
.ds { font: italic 400 13px/15px "Liberation Sans", sans-serif; width: 17px; color: #b9b9b9; white-space: nowrap; overflow: hidden; }
.sw { font: italic 400 8.3px/11px "Liberation Sans", sans-serif; color: #bdbdbd; white-space: nowrap; }
.sw b { font-weight: 700; }
.grip { width: 6px; background: #a5a7a9; border-right: 1px solid #b9bbbd; }
.quick { display: flex; align-items: center; padding-left: 21px; flex: 1; }
.qg { display: flex; align-items: center; gap: 4px; flex: none; }
.w22 { width: 22px; } .w27 { width: 27px; gap: 0; } .w23 { width: 23px; } .w24 { width: 24px; } .w26 { width: 26px; gap: 3px; } .w25 { width: 25px; gap: 5px; } .w12 { width: 12px; } .w16 { width: 16px; }
.q { width: 11px; height: 12px; flex: none; }
.q10 { width: 10px; }
.q8 { width: 8px; }
.hl { width: 16px; height: 17px; background: #a8a8a6; border: 1px solid #8a8a8a; display: flex; align-items: center; justify-content: center; }
.hl .q { width: 13px; height: 13px; }
.hl-caret { width: 8px; height: 17px; background: linear-gradient(#eef1f4, #c9d0d8); border: 1px solid #a3a8ad; border-left: 0; display: flex; align-items: center; justify-content: center; }
.search { width: 134px; height: 17px; margin-top: 1px; background: linear-gradient(#e6e8ea, #d6d9dc); border: 1px solid #4d5156; border-radius: 1px; display: flex; align-items: center; padding: 0 3px; }
.sf { width: 11px; height: 10px; margin-right: 3px; }
.search-text { flex: 1; font-size: 6.8px; color: #7c8085; }
.sl { width: 11px; height: 11px; margin-right: 4px; }
.winbtns { width: 73px; display: flex; align-items: center; padding-left: 6px; color: #7f8489; }
.help { width: 12px; font: 700 12px "Liberation Sans", sans-serif; color: #7c8186; }
.winbtns .caret { margin: 0 6px 0 2px; }
.w-min { width: 8px; height: 2px; margin: 6px 6px 0 0; background: #858a8f; }
.w-max { width: 11px; height: 10px; margin-right: 6px; }
.w-close { font: 700 10px "DejaVu Sans", sans-serif; color: #9a9fa4; }

/* main */
.main { flex: 1; display: flex; min-height: 0; }
.strip { width: 19px; flex: none; background: #d8dbdf; display: flex; flex-direction: column; align-items: center; }
.strip-top { height: 17px; width: 100%; background: #e5e6e8; flex: none; }
.dots { width: 15px; height: 2px; margin: 1px 0 6px; border-top: 1px dotted #70757a; flex: none; }
.l { width: 13px; height: 13px; margin-bottom: 2.5px; flex: none; }
.l-sep { width: 13px; height: 1px; background: #9ea3a8; margin: 1px 0 2.5px; flex: none; }
.l-end { width: 100%; height: 1px; background: #c1c4c8; margin-top: 3.5px; flex: none; }
.canvas { flex: 1; position: relative; background: linear-gradient(#394658, #5f6e81); overflow: hidden; }
.brush { position: absolute; left: 371px; top: 296px; width: 30px; height: 60px; }

/* dialog window (free-floating on the workspace) */
.dialog { position: absolute; left: 400px; top: 115px; width: 639px; height: 400px; border: 1px solid #222b36; border-radius: 5px 5px 3px 3px; background: linear-gradient(100deg, #bcd4ea, #c7dced 40%, #adcae5 85%, #bcd3e9); padding: 0 3px 3px; display: flex; flex-direction: column; box-shadow: 0 0 8px rgba(0,0,0,.45); }
.titlebar { height: 19px; flex: none; display: flex; align-items: flex-start; padding: 3px 0 0 1px; position: relative; }
.d-ico { width: 11px; height: 11px; margin-right: 4px; }
.d-title { color: #1d1d1d; line-height: 10px; }
.d-close { position: absolute; right: 0; top: -1px; width: 31px; height: 13px; background: linear-gradient(#dd9283, #c0392b 55%, #c9503f); border: 1px solid #80514c; border-top: 0; border-radius: 0 0 3px 3px; color: #fff; font: 700 8px/12px "DejaVu Sans", sans-serif; text-align: center; }
.navbar { height: 18px; flex: none; display: flex; align-items: center; padding-left: 2px; }
.nav-circle { width: 18px; height: 18px; border-radius: 50%; background: radial-gradient(circle at 50% 30%, #e9eff5, #bfcad6); border: 1px solid #8b9cae; margin-right: 1px; display: flex; align-items: center; justify-content: center; }
.nav-circle svg { width: 10px; height: 10px; }
.nav-drop { width: 0; height: 0; border-left: 2.5px solid transparent; border-right: 2.5px solid transparent; border-top: 3px solid #9fb1c3; margin: 0 3px 0 2px; }
.addr { width: 425px; height: 15px; background: linear-gradient(#edf3f9, #f6f9fc); border: 1px solid #8ea5bb; display: flex; align-items: center; padding-left: 2px; }
.s12 { width: 11px; height: 11px; flex: none; }
.s10 { width: 10px; height: 10px; flex: none; }
.addr-text { margin-left: 4px; color: #1f2a36; }
.tri-r { width: 0; height: 0; margin-left: 9px; border-top: 2.5px solid transparent; border-bottom: 2.5px solid transparent; border-left: 3px solid #222; }
.addr-caret { margin-left: auto; margin-right: 3px; }
.refresh { width: 17px; height: 15px; background: #ebf2f8; border: 1px solid #8ea5bb; border-left: 0; display: flex; align-items: center; justify-content: center; }
.refresh svg { width: 11px; height: 11px; }
.d-search { width: 134px; height: 15px; margin-left: 5px; background: #e9f0f7; border: 1px solid #a9bccd; display: flex; align-items: center; padding: 0 2px 0 5px; color: #7e8a96; font-style: italic; }
.d-search span { flex: 1; }
.inner { flex: 1; margin-top: 4px; border: 1px solid #8aa3bb; border-bottom: 0; display: flex; flex-direction: column; min-height: 0; background: #fff; }
.dtool { height: 20px; flex: none; background: linear-gradient(#f4f8fc, #e4edf6 50%, #d8e4f0); border-bottom: 1px solid #c5d3e0; display: flex; align-items: center; padding-left: 12px; color: #44576b; }
.dt-caret { margin-left: 5px; }
.dt-new { margin-left: 20px; }
.dt-right { margin-left: auto; display: flex; align-items: center; padding-right: 9px; }
.view { margin-right: 7px; }
.pane { width: 11px; height: 10px; margin-left: 13px; background: #fff; border: 1px solid #8a97a5; border-right-width: 2px; border-top-width: 2px; }
.qmark { width: 12px; height: 12px; border-radius: 50%; margin-left: 13px; background: radial-gradient(circle at 40% 30%, #7e9ed4, #23478f); color: #fff; font: 700 8px/12px "Liberation Sans", sans-serif; text-align: center; }
.browse { height: 221px; flex: none; display: flex; overflow: hidden; }
.side { width: 106px; flex: none; display: flex; background: #fff; }
.tree { width: 94px; flex: none; padding-top: 6px; white-space: nowrap; overflow: hidden; }
.g, .c { height: 15.35px; display: flex; align-items: center; gap: 2px; color: #3a3a3a; }
.g { padding-left: 14px; }
.c { padding-left: 21px; }
.gap { margin-top: 15.35px; }
.sb { display: flex; flex-direction: column; background: #f0f0f1; flex: none; }
.sb-side { width: 12px; padding-right: 2px; }
.sb-files { width: 12px; padding: 0 1px; background: #f1f1f3; }
.sb-up, .sb-dn { height: 11px; flex: none; background: linear-gradient(#f4f4f4, #d9dadc); border: 1px solid #c9cacc; border-radius: 1px; position: relative; }
.sb-up { margin-top: 2px; }
.sb-dn { margin-top: auto; margin-bottom: 1px; }
.sb-up::after, .sb-dn::after { content: ""; position: absolute; left: 2px; top: 3px; border-left: 2.5px solid transparent; border-right: 2.5px solid transparent; }
.sb-up::after { border-bottom: 3px solid #333; }
.sb-dn::after { border-top: 3px solid #333; }
.thumb { display: flex; flex: none; align-items: center; justify-content: center; }
.thumb::after { content: ""; width: 6px; height: 5px; border-top: 1px solid #8c959c; border-bottom: 1px solid #8c959c; background: linear-gradient(transparent 1px, #8c959c 1px, #8c959c 2px, transparent 2px); }
.thumb-gray { height: 126px; background: linear-gradient(90deg, #e2e3e5, #d2d3d6); border: 1px solid #bcbdc0; border-radius: 1px; }
.thumb-blue { height: 92px; background: linear-gradient(90deg, #d9eefb, #a9d4f0); border: 1px solid #8fb4cf; border-radius: 1px; }
.files { width: 337px; flex: none; padding: 5px 0 0 4px; display: grid; grid-template-columns: repeat(4, 81.5px); grid-template-rows: 80px 103px 64px; overflow: hidden; background: #fff; }
.f { display: flex; flex-direction: column; align-items: center; text-align: center; line-height: 11.5px; color: #333; }
.f p { width: 64px; }
.f p.lat { font-size: 8.5px; }
.fi { width: 64px; height: 64px; display: block; flex: none; overflow: visible; }
.fw { width: 64px; height: 64px; position: relative; flex: none; }
.framed { border: 1px solid #ececec; }
.framed .fi { margin: -1px; }
.sc { position: absolute; left: 0; bottom: 0; width: 14px; height: 14px; }
.framed .sc { left: -1px; bottom: -1px; }
.preview { flex: 1; background: #fcfcfd; display: flex; justify-content: center; align-items: flex-start; padding-top: 105px; color: #7d7d7d; }

.acad-a { font: 700 33px "Liberation Sans", sans-serif; fill: #fff; }
.sw-s { font: 700 36px "Liberation Sans", sans-serif; fill: #fff; }
.sw-w { font: 700 36px "Liberation Sans", sans-serif; fill: #e8e8e8; }
.ths-pc { font: 700 11px "Liberation Sans", sans-serif; fill: #d93a18; letter-spacing: 1px; }

/* bottom panel */
.panel { flex: 1; background: #f0f0f0; padding-top: 2px; display: flex; flex-direction: column; min-height: 0; color: #808080; }
.prow { display: flex; align-items: flex-start; flex: none; }
.r1 { height: 19px; }
.r2 { height: 17px; }
.r3 { height: 16px; margin-top: 5px; justify-content: flex-end; align-items: center; padding-right: 11px; color: #333; }
.r4 { height: 17px; margin-top: 4px; color: #333; }
.r5 { height: 19px; margin-top: 3px; justify-content: flex-end; padding-right: 12px; color: #333; }
.l1 { width: 128px; text-align: right; margin-right: 4px; line-height: 11px; }
.l2 { width: 74px; text-align: right; margin-right: 3px; line-height: 11px; }
.l3 { width: 125px; text-align: right; margin-right: 3px; line-height: 15px; font-size: 8.5px; }
.combo { width: 90px; height: 17px; border: 1px solid #bcbdbf; border-radius: 2px; display: flex; align-items: center; justify-content: flex-end; padding-right: 3px; flex: none; }
.combo.off { background: #f0f0f0; }
.btn { background: linear-gradient(#f3f3f3, #ebebeb 45%, #d8d8d8 50%, #cfcfcf); border: 1px solid #8a8a8a; border-radius: 2px; color: #333; line-height: 15px; }
.browsebtn { width: 106px; height: 19px; margin-left: 60px; }
.qf { margin-right: 1px; }
.fb { width: 16.5px; height: 16px; margin-left: 1px; background: linear-gradient(#f2f2f2, #cfcfcf); border: 1px solid #8f8f8f; border-radius: 2px; display: flex; align-items: center; justify-content: center; }
.fb svg { width: 13px; height: 13px; }
.fb-last { margin-left: 6px; }
.input { width: 356px; height: 17px; background: #fff; border: 1px solid #a9bccd; display: flex; align-items: center; justify-content: space-between; padding: 0 3px 0 2px; }
.sel { height: 12px; padding: 0 1.5px; background: #3a8ff0; color: #fff; font-size: 8px; line-height: 12px; white-space: nowrap; }
.type { width: 125px; margin-left: 9px; background: linear-gradient(#f2f2f2, #d8d8d8); border-color: #8a8a8a; justify-content: space-between; padding-left: 2px; color: #333; }
.open { width: 57px; height: 19px; display: flex; border: 1px solid #5b9cc6; box-shadow: inset 0 0 0 1px #bfe3f5; padding: 0; }
.open-t { flex: 1; line-height: 15px; text-align: center; padding-left: 2px; }
.open-c { width: 10px; border-left: 2px solid #6c6f72; display: flex; align-items: center; justify-content: center; }
.open-c .caret { border-left-width: 3.5px; border-right-width: 3.5px; border-top-width: 4px; }
.cancel { width: 57px; height: 19px; margin-left: 10px; }

.cursor { position: absolute; left: 857px; top: 259px; width: 9px; height: 15px; }

/* bottom */
.cmdbar { height: 21px; flex: none; background: linear-gradient(#d3d6da, #ccd0d4); border-bottom: 2px solid #808387; display: flex; align-items: center; padding-left: 2px; }
.vgrip { width: 2px; height: 15px; border-left: 1px dotted #4a4e52; margin-right: 3.5px; flex: none; }
.b { width: 15.45px; height: 14px; flex: none; }
.cmd-caret { margin: 0 3px 0 1px; }
.vsep { width: 1px; height: 13px; background: #7d8185; margin: 0 2px; flex: none; }
.vsep.tight { margin: 0 3px 0 0; }
.vgrip.mid { margin: 0 4px 0 8px; }
.cmd-end { width: 1px; height: 19px; background: #b3b6ba; margin-left: 3px; }
.status { height: 12px; flex: none; background: #dcdfe3; display: flex; align-items: center; padding-left: 1px; color: #2a2a2a; }
.st-help { margin-left: auto; width: 9px; height: 10px; background: #c7dfdc; border: 1px solid #7d9c98; color: #1e8f3a; font: 700 8px/8px "Liberation Sans", sans-serif; text-align: center; }
.st-pill { width: 11px; height: 7px; margin: 0 3px 0 35px; border-radius: 4px; background: #e5c14a; transform: rotate(-40deg); }
```
